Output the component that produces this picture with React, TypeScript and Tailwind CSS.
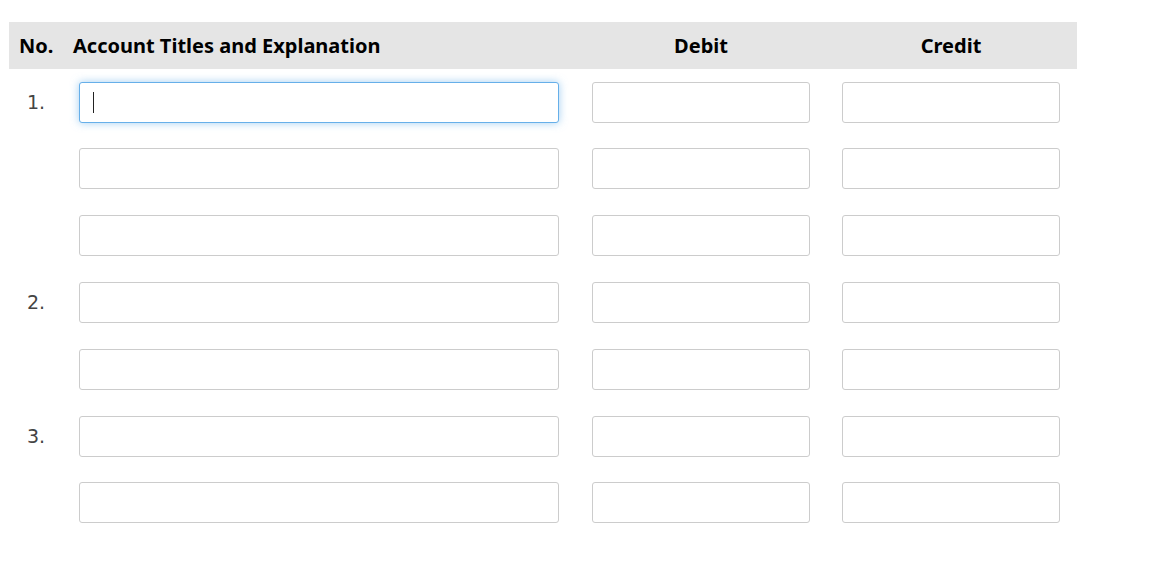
import React from "react";

const rows = [
  { n: "1.", focus: true, mt: "mt-[13px]" },
  { n: "", mt: "mt-[25px]" },
  { n: "", mt: "mt-[26px]" },
  { n: "2.", mt: "mt-[26px]" },
  { n: "", mt: "mt-[26px]" },
  { n: "3.", mt: "mt-[26px]" },
  { n: "", mt: "mt-[25px]" },
];

function Box({ w, focus }: { w: string; focus?: boolean }) {
  return (
    <div
      className={
        "relative h-[41px] rounded-[3px] bg-white border " +
        w +
        " " +
        (focus
          ? "border-[#66afe9] shadow-[0_0_8px_rgba(102,175,233,0.6)]"
          : "border-[#cccccc]")
      }
    >
      {focus && (
        <span className="absolute left-[13px] top-[9px] h-[21px] w-px bg-[#222]" />
      )}
    </div>
  );
}

export default function App() {
  return (
    <div
      className="bg-white w-[1162px] h-[574px] pt-[22px] pl-[9px]"
      style={{ fontFamily: '"Noto Sans", "Open Sans", sans-serif' }}
    >
      <div className="w-[1068px]">
        <div className="flex items-center h-[47px] bg-[#e5e5e5] text-[20px] leading-none font-bold text-black">
          <div className="w-[64px] pl-[10px]">No.</div>
          <div className="w-[486px]">Account Titles and Explanation</div>
          <div className="w-[33px]" />
          <div className="w-[218px] text-center">Debit</div>
          <div className="w-[32px]" />
          <div className="w-[218px] text-center">Credit</div>
        </div>
        <div className="flex flex-col">
          {rows.map((r, i) => (
            <div key={i} className={"flex items-center " + r.mt}>
              <div
                className="w-[70px] pl-[18px] text-[19px] text-[#444]"
                style={{ fontFamily: '"DejaVu Sans", sans-serif' }}
              >
                {r.n}
              </div>
              <Box w="w-[480px]" focus={r.focus} />
              <div className="w-[33px]" />
              <Box w="w-[218px]" />
              <div className="w-[32px]" />
              <Box w="w-[218px]" />
            </div>
          ))}
        </div>
      </div>
    </div>
  );
}
